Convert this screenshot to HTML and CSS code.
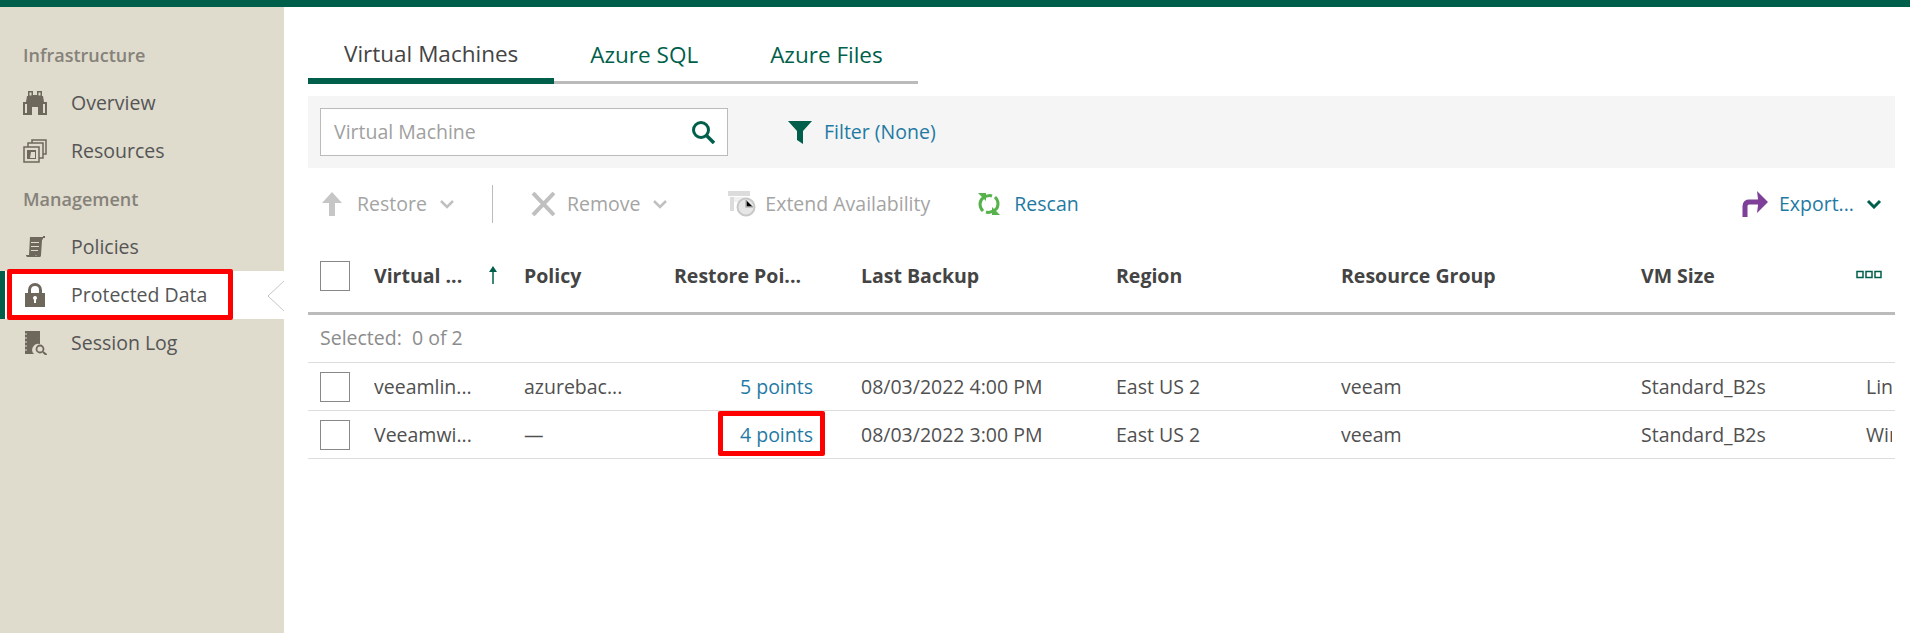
FILE: index.html
```html
<!doctype html>
<html>
<head>
<meta charset="utf-8">
<title>Protected Data</title>
<link rel="stylesheet" href="styles.css">
</head>

<body>
<div class="app">
    <aside class="sidebar">
        <div class="nav_title">Infrastructure</div>
        <a class="nav_item">
            <svg class="nav_icon" viewBox="0 0 24 24"><path fill="#6d675c" d="M5 0h5v4h4V0h5v5h1l1 6h3v13h-9v-8h-6v8H0V11h3l1-6h1z"/><path fill="#dfdbcd" d="M6.500 1.500h2v3h-2zM15.500 1.500h2v3h-2zM2 13h2v9H2zM20 13h2v9h-2z"/></svg>
            <span class="txt">Overview</span>
        </a>
        <a class="nav_item">
            <svg class="nav_icon" viewBox="0 0 24 24"><path fill="none" stroke="#6d675c" stroke-width="1.500" d="M1 8h15v15H1zM5 8V4h15v15h-4M9 4V1h14v14h-3"/><path fill="#6d675c" d="M4 11h9v9H4z"/><path fill="#dfdbcd" d="M8 13h4v6H7z"/></svg>
            <span class="txt">Resources</span>
        </a>
        <div class="nav_title">Management</div>
        <a class="nav_item">
            <svg class="nav_icon" viewBox="0 0 24 24"><path fill="#6d675c" d="M7 2h13v2l-1 1-1 15c0 2-1 2-2 2H5c-1 0-2-.500-2-2h9l1 .800 1-.800H6z"/><path fill="#dfdbcd" d="M8 7h8v1H8zM8 11h8v1H8zM8 15h7v1H8z"/><path fill="#6d675c" d="M20 1h2v2h-2z"/></svg>
            <span class="txt">Policies</span>
        </a>
        <a class="nav_item nav_item_on">
            <svg class="nav_icon" viewBox="0 0 24 24"><path fill="#6d675c" d="M2 10h3V7a7 7 0 0 1 14 0v3h3v14H2zM8 10h8V7a4 4 0 0 0-8 0z"/><path fill="#fff" d="M10 15a2 2 0 1 1 3 1.700V20h-2v-3.300a2 2 0 0 1-1-1.700z"/></svg>
            <span class="txt">Protected Data</span>
            <span class="mark mark_nav"></span>
            <svg class="nav_notch" viewBox="0 0 17 32"><path fill="#fff" stroke="#c4c4c4" d="M17 1 1 16l16 15"/></svg>
        </a>
        <a class="nav_item">
            <svg class="nav_icon" viewBox="0 0 24 24"><path fill="#6d675c" d="M2 0h15v13a6 6 0 0 0-6 10H2z"/><circle cx="17" cy="18" r="3.500" fill="none" stroke="#6d675c" stroke-width="1.800"/><path stroke="#6d675c" stroke-width="2" d="m20 21 3.500 3"/><path stroke="#dfdbcd" d="M1 3h3M1 7h3M1 11h3M1 15h3M1 19h3"/></svg>
            <span class="txt">Session Log</span>
        </a>
    </aside>

    <main class="content">
        <div class="tabs">
            <a class="tab tab_on">Virtual Machines</a>
            <a class="tab">Azure SQL</a>
            <a class="tab">Azure Files</a>
        </div>

        <div class="search_bar">
            <div class="search_box">
                <span class="txt">Virtual Machine</span>
                <svg class="search_icon" viewBox="0 0 24 24"><circle cx="10" cy="10" r="7.500" fill="none" stroke="#005f4b" stroke-width="3"/><path stroke="#005f4b" stroke-width="3.500" d="m15 15 8 8"/></svg>
            </div>
            <svg class="filter_icon" viewBox="0 0 24 24"><path fill="#005f4b" d="M0 1h24l-9 10v13l-6-4v-9z"/></svg>
            <a class="link txt">Filter (None)</a>
        </div>

        <div class="actions">
            <svg class="act_icon act_restore" viewBox="0 0 20 24"><path fill="#c6c6c6" d="M10 0l10 11h-7v13H7V11H0z"/></svg>
            <span class="txt">Restore</span>
            <svg class="act_caret" viewBox="0 0 16 10"><path fill="none" stroke="#c0c0c0" stroke-width="2.500" d="m2 2 6 6 6-6"/></svg>
            <span class="act_line"></span>
            <svg class="act_icon act_remove" viewBox="0 0 24 24"><path stroke="#c0c0c0" stroke-width="4" d="m2 1 21 22M23 1 2 23"/></svg>
            <span class="txt">Remove</span>
            <svg class="act_caret" viewBox="0 0 16 10"><path fill="none" stroke="#c0c0c0" stroke-width="2.500" d="m2 2 6 6 6-6"/></svg>
            <svg class="act_icon act_extend" viewBox="0 0 28 26"><path fill="#dcdcdc" d="M0 0h22v5H0zM2 6h4v14H2z"/><path fill="#f0f0f0" d="M6 6h15v5H6z"/><circle cx="18" cy="16" r="8.500" fill="#e6e6e6" stroke="#c8c8c8" stroke-width="2"/><path stroke="#b4b4b4" stroke-width="1.500" d="M18 9v7h7"/></svg>
            <span class="txt">Extend Availability</span>
            <svg class="act_icon act_rescan" viewBox="0 0 24 24"><path fill="none" stroke="#56b24b" stroke-width="3" d="M6 19C2 15 2 9 6 6c3-2 6-3 9-2M18 5c4 4 4 10 0 13-3 2-6 3-9 2"/><path fill="#56b24b" d="M1 1h8v8zM23 23h-8v-8z"/></svg>
            <a class="link txt">Rescan</a>
            <svg class="act_icon act_export" viewBox="0 0 26 26"><path fill="none" stroke="#7d3f98" stroke-width="5" d="M3 26V15c0-3 2-4 4-4h11"/><path fill="#7d3f98" d="M15 0l11 11-11 11 1-8V8z"/></svg>
            <a class="link txt">Export...</a>
            <svg class="act_caret act_caret_on" viewBox="0 0 16 10"><path fill="none" stroke="#005f4b" stroke-width="3" d="m2 2 6 6 6-6"/></svg>
        </div>

        <div class="table_wrap">
        <table class="grid">
            <colgroup>
                <col class="col_check">
                <col class="col_name">
                <col class="col_policy">
                <col class="col_points">
                <col class="col_backup">
                <col class="col_region">
                <col class="col_group">
                <col class="col_size">
                <col class="col_os">
            </colgroup>
            <thead>
                <tr>
                    <th><span class="check"></span></th>
                    <th><span class="name_head">Virtual ...<svg class="sort_icon" viewBox="0 0 10 18"><path fill="none" stroke="#005f4b" stroke-width="1.500" d="M5 18V2"/><path fill="#005f4b" d="M5 0l4 6H1z"/></svg></span></th>
                    <th>Policy</th>
                    <th>Restore Poi...</th>
                    <th>Last Backup</th>
                    <th>Region</th>
                    <th>Resource Group</th>
                    <th>VM Size</th>
                    <th class="cell_cols"><svg class="cols_icon" viewBox="0 0 26 10"><path fill="none" stroke="#005f4b" stroke-width="1.500" d="M1 1.500h6v6H1zM10 1.500h6v6h-6zM19 1.500h6v6h-6z"/></svg></th>
                </tr>
            </thead>
            <tbody>
                <tr class="row_selected">
                    <td colspan="9">Selected:&nbsp; 0 of 2</td>
                </tr>
                <tr>
                    <td><span class="check"></span></td>
                    <td>veeamlin...</td>
                    <td>azurebac...</td>
                    <td class="cell_points"><a class="link">5 points</a></td>
                    <td>08/03/2022 4:00 PM</td>
                    <td>East US 2</td>
                    <td>veeam</td>
                    <td>Standard_B2s</td>
                    <td><span class="os_text">Linux</span></td>
                </tr>
                <tr>
                    <td><span class="check"></span></td>
                    <td>Veeamwi...</td>
                    <td>—</td>
                    <td class="cell_points"><a class="link points_marked">4 points<span class="mark mark_points"></span></a></td>
                    <td>08/03/2022 3:00 PM</td>
                    <td>East US 2</td>
                    <td>veeam</td>
                    <td>Standard_B2s</td>
                    <td><span class="os_text">Windows</span></td>
                </tr>
            </tbody>
        </table>
        </div>
    </main>
</div>
</body>
</html>
```

FILE: styles.css
```css
html, body {
    margin: 0;
    height: 100%;
    overflow: hidden;
}
body {
    font: 19.5px "Open Sans", "Noto Sans", sans-serif;
    color: #505050;
    background: #fff;
}
.app {
    display: flex;
    height: calc(100% - 7px);
    border-top: 7px solid #005f4b;
}
.link {
    color: #1f7aa3;
}
/* text sits a little above the icons next to it */
.txt {
    margin-bottom: 2px;
}

/* left menu */
.sidebar {
    flex: 0 0 284px;
    padding-top: 24px;
    background: #dfdbcd;
    box-sizing: border-box;
}
.nav_title {
    height: 48px;
    line-height: 48px;
    padding-left: 23px;
    font-size: 18px;
    font-weight: 600;
    color: #85827a;
}
.nav_item {
    position: relative;
    display: flex;
    align-items: center;
    height: 48px;
    padding-left: 23px;
    color: #555;
}
.nav_icon {
    width: 24px;
    height: 24px;
    margin-right: 24px;
}
.nav_item_on {
    background: #fff;
    box-shadow: inset 5px 0 0 #005f4b;
}
.nav_notch {
    position: absolute;
    right: 0;
    top: 9px;
    width: 17px;
    height: 32px;
}
.mark {
    position: absolute;
    border: 5px solid #f00;
    border-radius: 2px;
    box-sizing: border-box;
}
.mark_nav {
    left: 7px;
    top: -2px;
    width: 226px;
    height: 51px;
}

/* right part */
.content {
    flex: 1;
    min-width: 0;
    padding: 0 15px 0 24px;
}
.tabs {
    display: flex;
    align-items: flex-end;
    width: 610px;
    height: 77px;
    margin-bottom: 12px;
    box-shadow: inset 0 -3px 0 #bbb;
}
.tab {
    flex: none;
    padding: 0 36px 14px;
    font-size: 22.500px;
    color: #005f4b;
    white-space: nowrap;
}
.tab_on {
    padding-bottom: 9px;
    border-bottom: 6px solid #005f4b;
    color: #444;
}
.search_bar {
    display: flex;
    align-items: center;
    height: 72px;
    padding-left: 12px;
    background: #f5f5f5;
}
.search_box {
    display: flex;
    align-items: center;
    justify-content: space-between;
    width: 408px;
    height: 48px;
    padding: 0 12px 0 13px;
    border: 1px solid #bbb;
    background: #fff;
    color: #a0a0a0;
    box-sizing: border-box;
}
.search_icon {
    width: 24px;
    height: 24px;
}
.filter_icon {
    width: 24px;
    height: 24px;
    margin: 0 12px 0 60px;
}
.actions {
    display: flex;
    align-items: center;
    height: 72px;
    padding-left: 14px;
    color: #a4a4a4;
}
.act_icon {
    flex: none;
}
.act_restore {
    width: 20px;
    height: 24px;
    margin-right: 15px;
}
.act_caret {
    width: 16px;
    height: 10px;
    margin-left: 12px;
}
.act_line {
    width: 1px;
    height: 38px;
    margin: 0 38px 0 37px;
    background: #bbb;
}
.act_remove {
    width: 24px;
    height: 24px;
    margin-right: 12px;
}
.act_extend {
    width: 28px;
    height: 26px;
    margin: 0 9px 0 60px;
}
.act_rescan {
    width: 24px;
    height: 24px;
    margin: 0 13px 0 47px;
}
.act_export {
    width: 26px;
    height: 26px;
    margin: 0 11px 0 auto;
}
.act_caret_on {
    margin-right: 13px;
}

/* table */
.table_wrap {
    overflow: hidden;
}
.grid {
    width: 1587px;
    table-layout: fixed;
    border-collapse: collapse;
}
.col_check { width: 66px; }
.col_name { width: 150px; }
.col_policy { width: 150px; }
.col_points { width: 187px; }
.col_backup { width: 255px; }
.col_region { width: 225px; }
.col_group { width: 300px; }
.col_size { width: 225px; }
.col_os { width: 29px; }
.grid th {
    height: 70px;
    padding: 0 0 2px;
    border-bottom: 3px solid #bbb;
    text-align: left;
    font-weight: 700;
    color: #444;
    white-space: nowrap;
}
.grid td {
    height: 46px;
    padding: 0 0 1px;
    border-bottom: 1px solid #ddd;
    white-space: nowrap;
    overflow: hidden;
}
.grid .row_selected td {
    padding-left: 12px;
    padding-bottom: 2px;
    height: 45px;
    color: #8c8c8c;
}
.check {
    display: block;
    width: 30px;
    height: 30px;
    margin: 0 0 -1px 12px;
    border: 1px solid #888;
    background: #fff;
    box-sizing: border-box;
}
th .check {
    margin-bottom: -2px;
}
.name_head {
    display: flex;
    align-items: center;
}
.sort_icon {
    width: 10px;
    height: 18px;
    margin-left: 26px;
}
.cell_cols {
    text-align: right;
}
.cols_icon {
    display: block;
    width: 26px;
    height: 10px;
    margin-left: -10px;
}
.os_text {
    display: block;
    width: 26px;
    overflow: hidden;
}
.grid .cell_points {
    padding-right: 48px;
    text-align: right;
    overflow: visible;
}
.points_marked {
    position: relative;
}
.mark_points {
    left: -22px;
    top: -10px;
    width: 107px;
    height: 45px;
}
```
